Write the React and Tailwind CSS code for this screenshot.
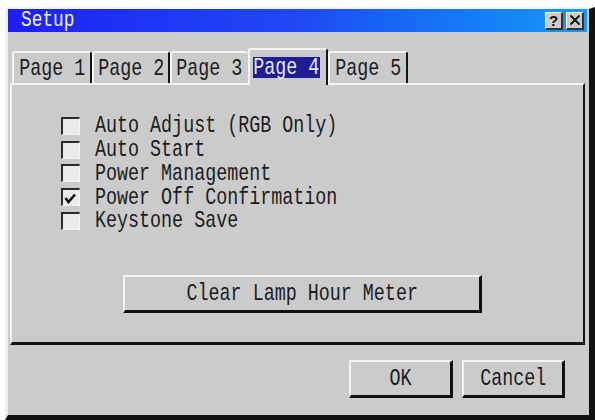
import React from 'react';

const mono = "font-['Liberation_Mono',monospace]";

// narrow tall monospace look: big mono face squeezed horizontally
const Txt = ({ children, className = '' }) => (
  <span className={`inline-block whitespace-pre leading-[21px] text-[24px] scale-x-[0.765] ${mono} ${className}`}>
    {children}
  </span>
);

const Tab = ({ label, width, selected, hideRight }) => {
  if (selected) {
    return (
      <div className="relative z-10 -mb-[2px] h-[37px] w-[80px] shrink-0 rounded-t-[3px] border-t-2 border-l-2 border-r-2 border-t-[#f4f4f4] border-l-[#f4f4f4] border-r-[#141414] bg-[#cbcbcb] pt-[7px]">
        <div className="ml-[3px] flex h-[21px] w-[67px] items-center justify-center bg-[#1d1d94]">
          <Txt className="text-[#e6e6ff]">{label}</Txt>
        </div>
      </div>
    );
  }
  return (
    <div
      className={`flex h-[32px] shrink-0 items-center justify-center rounded-t-[3px] border-t-2 border-l-2 border-t-[#f4f4f4] border-l-[#f4f4f4] bg-[#cbcbcb] pt-[1px] ${hideRight ? 'pr-[2px]' : 'border-r-2 border-r-[#141414]'} ${width}`}
    >
      <Txt className="text-[#1c1c1c]">{label}</Txt>
    </div>
  );
};

const Check = ({ label, checked }) => (
  <div className="flex h-[23.75px] items-center">
    <div className="flex h-[18px] w-[19px] shrink-0 items-end border-t-2 border-l-2 border-r border-b border-t-[#2a2a2a] border-l-[#2a2a2a] border-r-[#f4f4f4] border-b-[#f4f4f4] bg-[#ebebeb]">
      {checked && (
        <svg width="14" height="12" viewBox="0 0 14 12" className="mb-[1px] ml-[1px]">
          <path d="M1.5 6 L4.5 10 L11 2.5" fill="none" stroke="#111" strokeWidth="2.6" />
        </svg>
      )}
    </div>
    <div className="ml-[15px] flex items-center">
      <Txt className="origin-left text-[#1c1c1c]">{label}</Txt>
    </div>
  </div>
);

const Button = ({ label, className = '' }) => (
  <div
    className={`flex items-center justify-center border-t-2 border-l-2 border-r-[3px] border-b-[3px] border-t-[#f4f4f4] border-l-[#f4f4f4] border-r-[#111] border-b-[#111] bg-[#cbcbcb] ${className}`}
  >
    <Txt className="text-[#1c1c1c]">{label}</Txt>
  </div>
);

const App = () => {
  const options = [
    { label: 'Auto Adjust (RGB Only)', checked: false },
    { label: 'Auto Start', checked: false },
    { label: 'Power Management', checked: false },
    { label: 'Power Off Confirmation', checked: true },
    { label: 'Keystone Save', checked: false },
  ];

  return (
    <div className="h-[420px] w-[595px] overflow-hidden bg-white pl-[5px] pt-[7px]">
      <div className="flex h-[413px] w-[590px] flex-col border-t-2 border-l-[3px] border-r-[6px] border-b-[5px] border-t-[#f2f2f2] border-l-[#eeeeee] border-r-[#111] border-b-[#111] bg-[#cbcbcb]">
        {/* Title bar */}
        <div className="mr-[2px] flex h-[23px] items-center bg-linear-to-r from-[#1e1ef4] via-[#1f48f4] to-[#1b98f6]">
          <div className="ml-[13px] flex items-center">
            <span className={`inline-block origin-left whitespace-pre text-[22px] leading-[20px] scale-x-[0.81] text-[#eef2ff] ${mono}`}>
              Setup
            </span>
          </div>
          <div className="ml-auto mr-[3px] flex gap-[3px]">
            <div className="flex h-[18px] w-[18px] items-center justify-center border-t border-l border-r-2 border-b-2 border-t-white border-l-white border-r-[#333] border-b-[#333] bg-[#cbcbcb]">
              <span className="font-['Liberation_Sans',sans-serif] text-[15px] font-bold leading-none text-[#111]">?</span>
            </div>
            <div className="flex h-[18px] w-[18px] items-center justify-center border-t border-l border-r-2 border-b-2 border-t-white border-l-white border-r-[#333] border-b-[#333] bg-[#cbcbcb]">
              <svg width="12" height="12" viewBox="0 0 12 12">
                <path d="M1.5 1.5 L10.5 10.5 M10.5 1.5 L1.5 10.5" stroke="#111" strokeWidth="1.8" />
              </svg>
            </div>
          </div>
        </div>

        {/* Tabs */}
        <div className="mt-[16px] flex h-[35px] items-end pl-[4px]">
          <Tab label="Page 1" width="w-[80px]" />
          <Tab label="Page 2" width="w-[78px]" />
          <Tab label="Page 3" width="w-[78px]" hideRight />
          <Tab label="Page 4" selected />
          <Tab label="Page 5" width="w-[80px]" />
        </div>

        {/* Panel */}
        <div className="ml-[2px] h-[262px] w-[575px] border-t-2 border-l-2 border-r-2 border-b-[3px] border-t-[#f4f4f4] border-l-[#f4f4f4] border-r-[#141414] border-b-[#141414] pl-[49px] pt-[29px]">
          <div className="flex flex-col">
            {options.map(o => (
              <Check key={o.label} label={o.label} checked={o.checked} />
            ))}
          </div>
          <Button label="Clear Lamp Hour Meter" className="ml-[62px] mt-[42px] h-[38px] w-[359px]" />
        </div>

        {/* Footer */}
        <div className="mt-[15px] flex justify-end gap-[9px] pr-[24px]">
          <Button label="OK" className="h-[38px] w-[104px]" />
          <Button label="Cancel" className="h-[38px] w-[103px]" />
        </div>
      </div>
    </div>
  );
};

export default App;
